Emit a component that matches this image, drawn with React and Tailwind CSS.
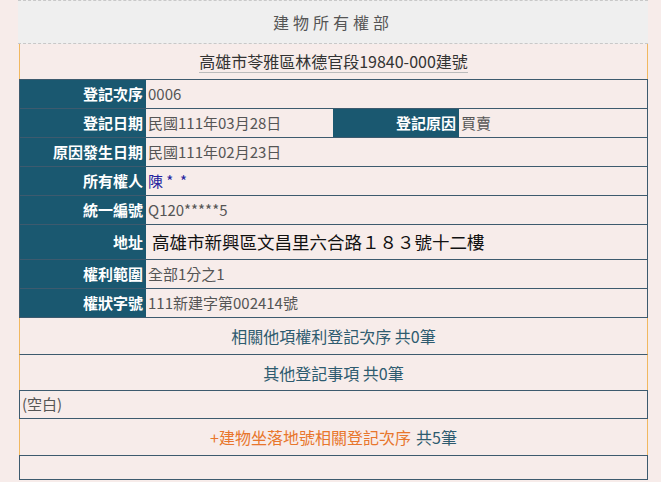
export default function App() {
    const font = { fontFamily: '"Noto Sans CJK TC", "Noto Sans", sans-serif' }
    return (
        <div className="w-[661px] h-[482px] overflow-hidden bg-[#f7ecea]" style={font}>
            <div className="ml-[18px] w-[630px]">
                <div className="h-[44px] bg-[#efefef] border-y border-dashed border-[#c8c8c8] flex items-center justify-center text-[16px] tracking-[4px] text-[#555]">
                    建物所有權部
                </div>
                <div className="ml-[1px] w-[629px]">
                    <div className="h-[35px] border-x border-[#f1b860] flex items-center justify-center text-[16px] text-[#333]">
                        <span className="border-b border-[#bbb] leading-[22px]">
                            高雄市苓雅區林德官段19840-000建號
                        </span>
                    </div>
                    <div className="border border-[#3d5a6e] bg-[#f7ecea]">
                        <Row label="登記次序" value="0006" />
                        <div className="flex h-[29px] border-t border-[#3d5a6e]">
                            <Label text="登記日期" />
                            <Value text="民國111年03月28日" className="w-[187px]" />
                            <Label text="登記原因" />
                            <Value text="買賣" />
                        </div>
                        <Row label="原因發生日期" value="民國111年02月23日" />
                        <Row label="所有權人" value="陳 *  *" color="text-[#2424a0]" />
                        <Row label="統一編號" value="Q120*****5" />
                        <div className="flex h-[35px] border-t border-[#3d5a6e]">
                            <Label text="地址" />
                            <div className="flex-1 flex items-center pl-[6px] text-[17.5px] text-[#111]">
                                高雄市新興區文昌里六合路１８３號十二樓
                            </div>
                        </div>
                        <Row label="權利範圍" value="全部1分之1" />
                        <Row label="權狀字號" value="111新建字第002414號" />
                    </div>
                    <div className="h-[36px] border-x border-[#f1b860] flex items-center justify-center text-[16px] text-[#2e5b6f]">
                        相關他項權利登記次序 共0筆
                    </div>
                    <div className="h-[36px] border-x border-t border-[#f1b860] border-t-[#3d5a6e] flex items-center justify-center text-[16px] text-[#2e5b6f]">
                        其他登記事項 共0筆
                    </div>
                    <div className="h-[29px] border border-[#3d5a6e] flex items-center pl-[2px] text-[15px] text-[#555]">
                        (空白)
                    </div>
                    <div className="h-[36px] border-x border-[#f1b860] flex items-center justify-center text-[16px] text-[#2e5b6f]">
                        <span className="text-[#e8762c]">+建物坐落地號相關登記次序</span>
                        <span className="ml-[5px]">共5筆</span>
                    </div>
                    <div className="h-[25px] border border-[#3d5a6e]"></div>
                </div>
            </div>
        </div>
    )
}

function Label({ text }) {
    return (
        <div className="w-[126px] shrink-0 bg-[#1a5870] text-white font-bold text-[15px] flex items-center justify-end pr-[3px]">
            {text}
        </div>
    )
}

function Value({ text, className = '', color = 'text-[#555]' }) {
    return (
        <div className={`flex items-center pl-[2px] text-[15px] whitespace-pre ${color} ${className || 'flex-1'}`}>
            {text}
        </div>
    )
}

function Row({ label, value, color }) {
    return (
        <div className="flex h-[29px] border-t border-[#3d5a6e] first:border-t-0 first:h-[28px]">
            <Label text={label} />
            <Value text={value} color={color} />
        </div>
    )
}
